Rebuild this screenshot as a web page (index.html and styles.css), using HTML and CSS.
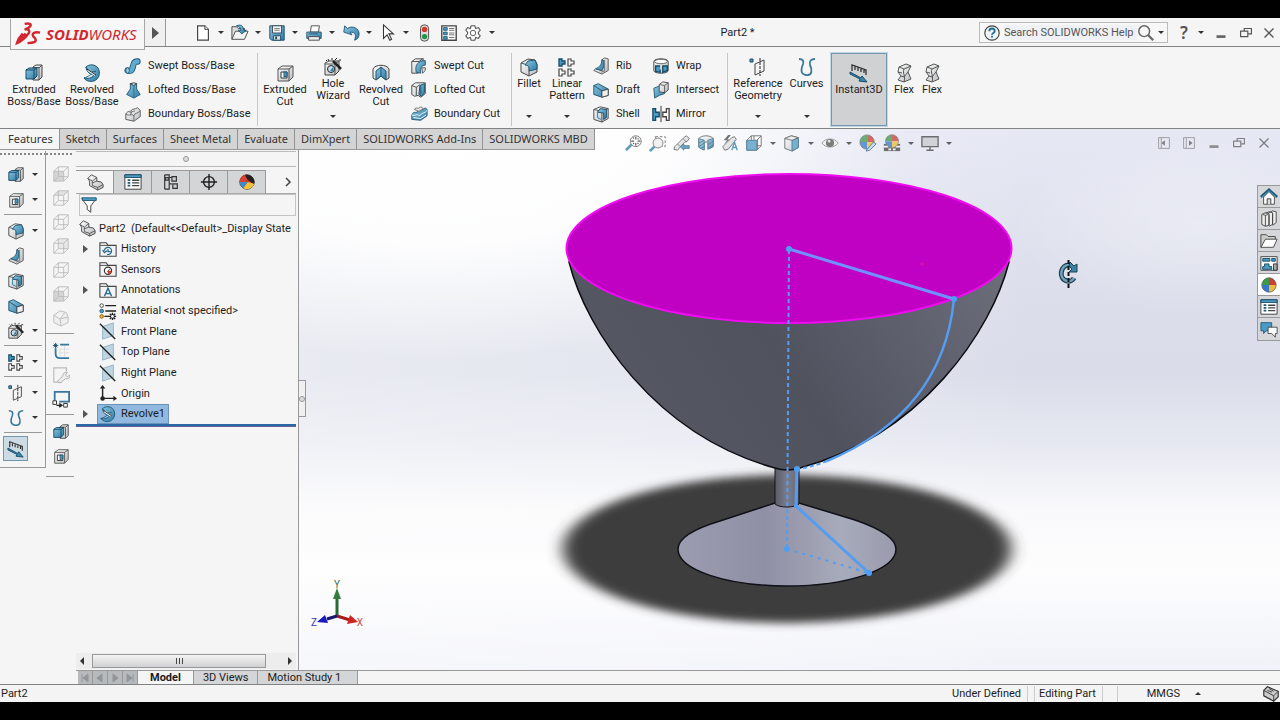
FILE: index.html
```html
<!DOCTYPE html>
<html lang="en">
<head>
<meta charset="utf-8">
<title>Part2 - SOLIDWORKS</title>
<link rel="stylesheet" href="styles.css">
</head>
<body>
<svg class="sprite" aria-hidden="true">
  <defs>
    <linearGradient id="blue" x1="0" y1="0" x2="1" y2="1"><stop offset="0" stop-color="#8cc4de"/><stop offset="1" stop-color="#2f7da6"/></linearGradient>
    <linearGradient id="gray" x1="0" y1="0" x2="1" y2="1"><stop offset="0" stop-color="#fff"/><stop offset="1" stop-color="#b9bcbf"/></linearGradient>
  </defs>
  <symbol id="ext-boss" viewBox="0 0 20 20"><path d="M9 4l3-2h6v12l-3 3H9z" fill="url(#gray)" stroke="#444"/><path d="M15 5v12M15 5l3-3M9 4.500h6" fill="none" stroke="#555"/><path d="M2 7l3-2h8v8l-3 3H2z" fill="url(#blue)" stroke="#174a66"/><path d="M2 7h8v9M10 7l3-2" fill="none" stroke="#174a66"/></symbol>
  <symbol id="rev-boss" viewBox="0 0 20 20"><path d="M4 4c3-3 9-3 12 1 3 5 1 11-4 13-4 1-8 0-10-3 4 1 8 0 10-3C9 12 4 9 4 4z" fill="url(#blue)" stroke="#1b5573"/><path d="M4 4c1 4 8 6 10 4M2 15c4-1 8-4 8-5" fill="none" stroke="#1b5573"/><path d="M6 7l7 5" stroke="#fff" stroke-width="2"/><path d="M5 6l9 6" stroke="#222"/></symbol>
  <symbol id="swept-boss" viewBox="0 0 20 20"><path d="M4 15c9 3 3-11 11-10" fill="none" stroke="#1f5877" stroke-width="7" stroke-linecap="round"/><path d="M4 15c9 3 3-11 11-10" fill="none" stroke="#62abd0" stroke-width="5" stroke-linecap="round"/><ellipse cx="4" cy="15" rx="2" ry="3" fill="#9cd0e8" stroke="#1f5877"/></symbol>
  <symbol id="loft-boss" viewBox="0 0 20 20"><path d="M7 3h7v6l4 6-7 4-8-4 4-6z" fill="url(#blue)" stroke="#1f5877"/><path d="M11 5v14" stroke="#2a6d90" fill="none"/><path d="M7 3l4 2 3-2-3-1z" fill="#dceef6" stroke="#333"/></symbol>
  <symbol id="bound-boss" viewBox="0 0 20 20"><path d="M2 10c2-4 5-2 6-4s5-1 7-3l3 3v7l-7 5-9-2z" fill="url(#gray)" stroke="#555"/><path d="M2 10c4 3 6-1 9 2 1-4 5-2 7-6M11 12v6M6 8c3 1 3-2 6-1M7 11l2-4" fill="none" stroke="#666"/></symbol>
  <symbol id="ext-cut" viewBox="0 0 20 20"><path d="M3 6l4-3h11v11l-4 4H3z" fill="url(#gray)" stroke="#555"/><path d="M3 6h11v12M14 6l4-3" fill="none" stroke="#555"/><path d="M6 9h6v6H6z" fill="#fff" stroke="#333"/><path d="M9 9h3v4l-3 1z" fill="#4b9cc4" stroke="#1f5877"/></symbol>
  <symbol id="hole" viewBox="0 0 20 20"><path d="M2 6l4-2h10v10l-4 4H2z" fill="url(#gray)" stroke="#444"/><path d="M2 7h10v11M12 7l4-3" fill="none" stroke="#555"/><circle cx="8" cy="12" r="3.500" fill="#c6dfeb" stroke="#222"/><path d="M7 14c3 1 4-1 3-4" fill="#2f7da6"/><path d="M10 4l8 8" stroke="#222" stroke-width="2.500"/><path d="M5 2l1 2M9 1v2M14 1l-2 2M3 3l1 1M16 3h2" stroke="#222"/></symbol>
  <symbol id="rev-cut" viewBox="0 0 20 20"><path d="M2 6c2-5 14-5 16 0v9l-3 2-5-4-5 4-3-2z" fill="url(#gray)" stroke="#444"/><path d="M5 8l5-4 5 4v9l-5-4-5 4z" fill="url(#blue)" stroke="#1f5877"/><path d="M10 4v9" stroke="#1f5877"/></symbol>
  <symbol id="swept-cut" viewBox="0 0 20 20"><path d="M2 5l4-3h9l-2 4-4 12H2z" fill="url(#gray)" stroke="#444"/><path d="M2 5h8M10 5l4-3" stroke="#444"/><path d="M17 4v5c-4 0-6 3-5 9l-5-1C5 9 9 4 17 4z" fill="url(#blue)" stroke="#1f5877"/><path d="M13 12h4v3l-3 3z" fill="#ddd" stroke="#555"/></symbol>
  <symbol id="loft-cut" viewBox="0 0 20 20"><path d="M2 5l4-3h11v12l-5 4-3-2-4 1-3-2z" fill="url(#gray)" stroke="#444"/><path d="M2 5l5 2v9M7 7l4-3" stroke="#444" fill="none"/><path d="M11 5l5-2v10l-3 4-3-2z" fill="url(#blue)" stroke="#174a66"/><path d="M12 5v10" stroke="#174a66"/></symbol>
  <symbol id="bound-cut" viewBox="0 0 20 20"><path d="M2 11c2-5 4-1 7-4 2-3 5 0 8-4l2 2v7l-7 5-10-1z" fill="url(#blue)" stroke="#1f5877"/><path d="M2 11c5 2 4-2 9 1 2-4 5-2 8-6M4 14l8 1 6-4" stroke="#fff" fill="none"/><path d="M5 5c2-4 4 1 7-3l3 2-5 3z" fill="#eee" stroke="#666"/></symbol>
  <symbol id="fillet" viewBox="0 0 20 20"><path d="M2 6l7-4 7 1 2 4v8l-8 4-8-4z" fill="url(#gray)" stroke="#444"/><path d="M9 8l-7-2M10 10v9" stroke="#555" fill="none"/><path d="M9 4l7-1 2 5v4l-8 2c1-4-1-6-4-6z" fill="url(#blue)" stroke="#1f5877"/></symbol>
  <symbol id="pattern" viewBox="0 0 20 20"><path d="M2 2h3v2h3v3H5v2H2z" fill="#4b9cc4" stroke="#174a66" stroke-width="1.300"/><path d="M11 2h3v2h3v3h-3v2h-3zM2 12h3v2h3v3H5v2H2zM11 12h3v2h3v3h-3v2h-3z" fill="#fff" stroke="#444" stroke-width="1.200"/></symbol>
  <symbol id="rib" viewBox="0 0 20 20"><path d="M11 3l3-2 4 1v13l-7 4-9-4 2-2 7 2z" fill="url(#gray)" stroke="#555"/><path d="M14 3v12l-4 2M11 15l3 1" fill="none" stroke="#777"/><path d="M11 3c0 5-2 8-7 10l6 2 3-3V4z" fill="url(#blue)" stroke="#1f5877"/></symbol>
  <symbol id="draft" viewBox="0 0 20 20"><path d="M2 5l5-2 11 6v7l-7 2-9-3z" fill="url(#blue)" stroke="#1f4f6b"/><path d="M2 5l9 6v7M11 11l7-2" fill="none" stroke="#1f4f6b"/><path d="M11 11l7-2v7l-7 2z" fill="#eee" stroke="#444"/></symbol>
  <symbol id="shell" viewBox="0 0 20 20"><path d="M2 5l7-3 9 2v11l-7 4-9-3z" fill="url(#gray)" stroke="#444"/><path d="M2 5l9 2 7-3M11 7v12" fill="none" stroke="#444"/><path d="M6 8l3-4 7 1v9l-3 2V9z" fill="url(#blue)" stroke="#174a66"/><path d="M6 8v6l4 2" stroke="#2f7da6" fill="#b7d9e8"/></symbol>
  <symbol id="wrap" viewBox="0 0 20 20"><path d="M2 5c0-4 16-4 16 0v10c0 4-16 4-16 0z" fill="url(#gray)" stroke="#444"/><ellipse cx="10" cy="5" rx="7" ry="2.500" fill="#fff" stroke="#555"/><path d="M9 10H4v6l5 1v-3M12 10h5v5l-5 2z" fill="#4b9cc4" stroke="#174a66" stroke-width="1.500"/></symbol>
  <symbol id="intersect" viewBox="0 0 20 20"><path d="M2 8l5-2 9 1-2 7-6 2-5 3z" fill="url(#blue)" stroke="#1f5877"/><path d="M8 4l4-3 6 1v8l-4 3-6-1z" fill="url(#gray)" stroke="#444"/><path d="M8 4l6 1 4-3M14 5v8" fill="none" stroke="#555"/></symbol>
  <symbol id="mirror" viewBox="0 0 20 20"><path d="M1 4h3v4h4v5H4v4H1z" fill="#4b9cc4" stroke="#174a66" stroke-width="1.500"/><path d="M19 4h-3v4h-4v5h4v4h3z" fill="#fff" stroke="#444" stroke-width="1.500"/><path d="M10 1v18" stroke="#222"/></symbol>
  <symbol id="refgeo" viewBox="0 0 20 20"><path d="M2 2h3v3H2z" fill="#5d97b5" stroke="#174a66"/><path d="M7 7l9-4v11l-9 4z" fill="#f5f5f5" stroke="#444"/><path d="M12 1v18" stroke="#222" stroke-dasharray="3 1"/></symbol>
  <symbol id="curves" viewBox="0 0 20 20"><path d="M2 2c4 0 5 2 4 5-2 5-3 10 3 11 7 1 6-6 4-10-1-4 1-6 5-6" fill="none" stroke="#37789c" stroke-width="1.800"/></symbol>
  <symbol id="instant" viewBox="0 0 20 20"><path d="M3 8V2l14 5v5M6 3v4M9 4v4M12 5v4M15 6v4" fill="none" stroke="#333" stroke-width="1.300"/><path d="M1 9l11 6 1-2 5 6-8-1 1-2L1 11z" fill="#3a88ae" stroke="#174a66"/></symbol>
  <symbol id="flex" viewBox="0 0 20 20"><path d="M5 4l7-3 5 2-3 6 3 7-7 3-6-2 3-4-3-4z" fill="url(#gray)" stroke="#555"/><path d="M5 4l5 2 7-3M10 6c-2 4 2 7 0 13M4 9l4 1M7 13l3 1 4-5" fill="none" stroke="#555"/></symbol>
  <symbol id="new" viewBox="0 0 20 20"><path d="M4 2h8l4 4v12H4z" fill="#fff" stroke="#444" stroke-width="1.300"/><path d="M12 2v4h4" fill="#ddd" stroke="#444"/></symbol>
  <symbol id="open" viewBox="0 0 20 20"><path d="M1 17V3h5l2 2h7v4" fill="#ddd" stroke="#444"/><path d="M1 17L5 8h14l-4 9z" fill="#f4f4f4" stroke="#444"/><path d="M6 2c5-2 8 0 8 5h3l-5 4-4-4h3c0-3-2-4-5-5z" fill="url(#blue)" stroke="#1f5877"/></symbol>
  <symbol id="save" viewBox="0 0 20 20"><path d="M2 2h16v16H4l-2-2z" fill="url(#blue)" stroke="#174a66"/><path d="M5 2h10v8H5z" fill="#f5f5f5" stroke="#345"/><path d="M7 5h6M7 7h6" stroke="#777"/><path d="M6 13h8v5H6z" fill="#ddd" stroke="#174a66"/><path d="M8 14h2v3H8z" fill="#174a66"/></symbol>
  <symbol id="print" viewBox="0 0 20 20"><path d="M6 9l1-7h9l-1 7z" fill="#fff" stroke="#444"/><path d="M2 9h16v7H2z" fill="url(#blue)" stroke="#1f4f6b"/><path d="M4 14h12v4H4z" fill="#eee" stroke="#444"/><path d="M4 11h10" stroke="#1f4f6b"/></symbol>
  <symbol id="undo" viewBox="0 0 20 20"><path d="M2 9l1-7 3 3c6-4 13 0 13 6 0 4-2 6-5 7 2-6 1-9-5-9l2 3z" fill="url(#blue)" stroke="#1f5877"/></symbol>
  <symbol id="cursor" viewBox="0 0 20 20"><path d="M5 1v15l4-4 3 6 2-1-3-6h5z" fill="#fff" stroke="#333" stroke-width="1.200"/></symbol>
  <symbol id="traffic" viewBox="0 0 20 20"><rect x="5" y="1" width="9" height="18" rx="4" fill="#ddd" stroke="#444"/><circle cx="9.500" cy="6" r="3" fill="#d43a2c"/><circle cx="9.500" cy="14" r="3" fill="#259447"/></symbol>
  <symbol id="props" viewBox="0 0 20 20"><path d="M2 2h16v16H2z" fill="#fff" stroke="#444" stroke-width="1.500"/><path d="M4 4h4v3H4zM4 9h4v3H4zM4 14h4v3H4z" fill="#4b9cc4" stroke="#235b78"/><path d="M10 5h6M10 7h6M10 10h6M10 12h6M10 15h6" stroke="#666"/></symbol>
  <symbol id="gear" viewBox="0 0 20 20"><path d="M8 2h4l1 3 3-1 2 3-2 2v2l2 2-2 3-3-1-1 3H8l-1-3-3 1-2-3 2-2V9L2 7l2-3 3 1z" fill="#fafafa" stroke="#555" stroke-width="1.200"/><circle cx="10" cy="10" r="3" fill="#fff" stroke="#555"/></symbol>
  <symbol id="help" viewBox="0 0 20 20"><circle cx="10" cy="10" r="8" fill="#eef4f7" stroke="#444" stroke-width="1.300"/><path d="M7 8c0-4 6-4 6 0 0 2-3 2-3 4M10 13v2" fill="none" stroke="#1f6a91" stroke-width="2"/></symbol>
  <symbol id="search" viewBox="0 0 20 20"><circle cx="8" cy="8" r="6" fill="none" stroke="#666" stroke-width="1.600"/><path d="M12 12l6 6" stroke="#666" stroke-width="2.500"/></symbol>
  <symbol id="zoomfit" viewBox="0 0 20 20"><path d="M7 12l-6 6" stroke="#2f7da6" stroke-width="3"/><circle cx="12" cy="8" r="6" fill="#fff" stroke="#444"/><path d="M12 3v3M12 10v3M7 8h3M14 8h3M10 5l-1-1M15 5l-1 1M9 11l1-1M14 10l1 1" stroke="#222" stroke-width="1.300"/></symbol>
  <symbol id="zoomarea" viewBox="0 0 20 20"><path d="M7 3h11v11h-4M7 3v2" stroke="#444" stroke-dasharray="3 2" fill="none"/><path d="M6 14l-5 5" stroke="#2f7da6" stroke-width="3"/><circle cx="10" cy="10" r="5.500" fill="#eee" stroke="#555"/></symbol>
  <symbol id="prevview" viewBox="0 0 20 20"><path d="M2 14L12 4l3-2 3 3-2 3-3 1-8 9-4-1z" fill="url(#gray)" stroke="#444"/><path d="M11 5l4 4M5 11l3 3" stroke="#555"/><path d="M18 13v3h-6v2l-4-4 4-3v2z" fill="#3a88ae" stroke="#1f5877"/></symbol>
  <symbol id="section" viewBox="0 0 20 20"><path d="M2 5c3-4 13-4 16 0v9l-4 2V9H8v8l-6-3z" fill="url(#gray)" stroke="#444"/><path d="M2 5l6 2v11l-6-3zM12 7l6-2v9l-6 3z" fill="url(#blue)" stroke="#1f5877"/><path d="M2 10l6-3M2 14l6-4M4 16l4-2M12 12l6-4M12 16l6-4" stroke="#1f5877" fill="none"/></symbol>
  <symbol id="annoview" viewBox="0 0 20 20"><path d="M2 14L12 4l3-1 2 3-9 11-4 1z" fill="url(#gray)" stroke="#444"/><path d="M8 1l-5 6h4l-4 4 7-5H7l4-5z" fill="#444"/><path d="M12 18l3-9 3 9M13 15h4" stroke="#2f7da6" stroke-width="1.500" fill="none"/></symbol>
  <symbol id="orient" viewBox="0 0 20 20"><path d="M2 7l5-5h11v11l-5 5H2z" fill="#fff" stroke="#444"/><path d="M2 7h11v11H2z" fill="#4b9cc4" stroke="#1f5877"/><path d="M7 2v5M13 7l5-5M13 13h5M10 2v5M14 6v11" stroke="#444"/></symbol>
  <symbol id="display" viewBox="0 0 20 20"><path d="M2 5l7-3 8 2v11l-7 4-8-3z" fill="url(#gray)" stroke="#444"/><path d="M10 7l7-3v11l-7 4z" fill="#4b9cc4" stroke="#1f5877"/><path d="M2 5l8 2 7-3-8-2z" fill="#eee" stroke="#444"/></symbol>
  <symbol id="eye" viewBox="0 0 20 20"><path d="M1 10c4-6 14-6 18 0-4 6-14 6-18 0z" fill="#f0f0f0" stroke="#777"/><circle cx="10" cy="10" r="4.500" fill="#555"/><circle cx="9" cy="8" r="1.500" fill="#ddd"/></symbol>
  <symbol id="ball" viewBox="0 0 20 20"><circle cx="10" cy="10" r="8" fill="#fff"/><path d="M10 10V2a8 8 0 0 0-8 8z" fill="#3c9b45"/><path d="M10 10h8a8 8 0 0 0-8-8z" fill="#cc3e38"/><path d="M10 10H2a8 8 0 0 0 8 8z" fill="#3479cf"/><path d="M10 10v8a8 8 0 0 0 8-8z" fill="#efbe34"/><circle cx="10" cy="10" r="8" fill="none" stroke="#555" stroke-width=".8"/></symbol>
  <symbol id="ballpencil" viewBox="0 0 20 20"><use href="#ball" x="-1" y="-1" width="20" height="20"/><path d="M9 17l7-8 3 2-7 7-4 1z" fill="#b7d9e8" stroke="#1f5877"/></symbol>
  <symbol id="scene" viewBox="0 0 20 20"><path d="M1 11h18v8H1z" fill="#444"/><path d="M1 13h5v2H1zM14 13h5v2h-5zM6 16h3v2H6zM11 16h3v2h-3z" fill="#fff"/><use href="#ball" x="1" y="-1" width="18" height="18"/></symbol>
  <symbol id="apptab" viewBox="0 0 20 20"><circle cx="10" cy="10" r="8" fill="#c8392f" stroke="#333"/><path d="M2 10a8 8 0 0 1 6-8c4 1 2 7 0 8z" fill="#d8402f"/><path d="M2 10h9l-5 7a8 8 0 0 1-4-7z" fill="#438ac5"/><path d="M6 17l5-7 7 2c-2 6-8 7-12 5z" fill="#f0c339"/><path d="M8 2c6-1 11 4 10 10-5-2-9-5-10-10z" fill="#222"/></symbol>
  <symbol id="monitor" viewBox="0 0 20 20"><path d="M1 3h18v11H1z" fill="#c7ccd0" stroke="#444" stroke-width="1.500"/><path d="M10 14v4M6 18h8" stroke="#444" stroke-width="1.500"/></symbol>
  <symbol id="dock-l" viewBox="0 0 20 20"><path d="M4 4h12v12H4zM7 4v12" fill="none" stroke="#777"/><path d="M7 10l4-3v6z" fill="#555"/></symbol>
  <symbol id="dock-r" viewBox="0 0 20 20"><path d="M4 4h12v12H4zM7 4v12" fill="none" stroke="#777"/><path d="M14 10l-4-3v6z" fill="#555"/></symbol>
  <symbol id="min" viewBox="0 0 20 20"><path d="M5 14h10" stroke="#666" stroke-width="3"/></symbol>
  <symbol id="restore" viewBox="0 0 20 20"><path d="M4 8h8v6H4zM8 8V5h8v6h-4" fill="none" stroke="#555" stroke-width="1.300"/></symbol>
  <symbol id="close" viewBox="0 0 20 20"><path d="M5 5l10 10M15 5L5 15" stroke="#555" stroke-width="1.500"/></symbol>
  <symbol id="home" viewBox="0 0 20 20"><path d="M4 10v8h12v-8l-6-6z" fill="#fff" stroke="#444"/><path d="M1 10l9-8 9 8" fill="none" stroke="#1f5877" stroke-width="3"/><path d="M2 10l8-7 8 7" fill="none" stroke="#4b9cc4"/><path d="M8 18v-6h4v6" fill="#ddd" stroke="#333"/></symbol>
  <symbol id="library" viewBox="0 0 20 20"><path d="M2 5l4-2 4 1v13l-4 1-4-2zM6 4l4-2 4 1v13l-4 2M10 3l4-2 4 1v12l-4 3" fill="#eee" stroke="#444"/><path d="M6 6v12M10 5v12M14 4v12M3 5l3 1 3-1" fill="none" stroke="#444"/></symbol>
  <symbol id="folder" viewBox="0 0 20 20"><path d="M1 17V3h6l2 2h8v3" fill="#ccc" stroke="#444"/><path d="M1 17L6 8h13l-4 9z" fill="#fff" stroke="#444"/></symbol>
  <symbol id="palette" viewBox="0 0 20 20"><path d="M1 3h18v15H1z" fill="#fff" stroke="#333"/><path d="M3 5h8v3H3zM13 5h4v3h-4zM5 11h5v3h3v3H3v-3h2z" fill="#4b9cc4" stroke="#174a66"/><path d="M15 11h4v7h-4z" fill="#aaa" stroke="#333"/></symbol>
  <symbol id="list" viewBox="0 0 20 20"><path d="M1 2h18v16H1z" fill="#fff" stroke="#333"/><path d="M1 2h18v3H1z" fill="#4b9cc4" stroke="#174a66"/><path d="M4 8h3M4 11h3M4 14h3" stroke="#1f5877" stroke-width="2"/><path d="M9 8h8M9 11h8M9 14h8" stroke="#444" stroke-width="1.500"/></symbol>
  <symbol id="chat" viewBox="0 0 20 20"><path d="M1 3h12v9H7l-3 3v-3H1z" fill="#4b9cc4" stroke="#1f5877"/><path d="M9 8h10v7h-2v4l-4-4H9z" fill="#fff" stroke="#444"/></symbol>
  <symbol id="part" viewBox="0 0 20 20"><path d="M2 6l4-4 6 3v4l5 1 2 3v3l-6 3-9-5V9z" fill="url(#gray)" stroke="#444"/><path d="M2 6l5 3 5-4M7 9v5l6 2 6-3M7 11l5-2M13 16v3" fill="none" stroke="#555"/></symbol>
  <symbol id="config" viewBox="0 0 20 20"><path d="M3 2h5v16H3M3 2v16M8 5h3M8 12h3" fill="none" stroke="#333" stroke-width="1.300"/><path d="M4 5h3v3H4zM11 4h5v5h-5zM12 12h5v5h-5z" fill="#ccc" stroke="#333" stroke-width="1.300"/></symbol>
  <symbol id="target" viewBox="0 0 20 20"><circle cx="10" cy="10" r="6" fill="none" stroke="#222" stroke-width="1.600"/><path d="M10 1v18M1 10h18" stroke="#222" stroke-width="1.600"/></symbol>
  <symbol id="filter" viewBox="0 0 20 20"><path d="M2 3h16l-6 8v7l-4-3v-4z" fill="#fff" stroke="#333"/><path d="M2 2h16v3H3z" fill="#4b9cc4" stroke="#1f5877"/></symbol>
  <symbol id="cube" viewBox="0 0 20 20"><path d="M2 7l5-5h11v11l-5 5H2zM2 7h11v11M13 7l5-5M7 2v11h11M7 13l-5 5" fill="none" stroke="#bbb"/></symbol>
  <symbol id="cube-front" viewBox="0 0 20 20"><path d="M2 7h11v11H2z" fill="#d5d5d5"/><use href="#cube" width="20" height="20"/></symbol>
  <symbol id="cube-top" viewBox="0 0 20 20"><path d="M2 7l5-5h11l-5 5z" fill="#e2e2e2"/><use href="#cube" width="20" height="20"/></symbol>
  <symbol id="cube-iso" viewBox="0 0 20 20"><path d="M7 2h11v11H7z" fill="#e8e8e8"/><use href="#cube" width="20" height="20"/></symbol>
  <symbol id="cube-fil" viewBox="0 0 20 20"><path d="M2 7l7-5 7 2 2 5v6l-8 4-8-4zM2 7l7 4 5-7M9 11l1 8M9 11l9-2" fill="#eee" stroke="#bbb"/></symbol>
  <symbol id="sketch" viewBox="0 0 20 20"><path d="M9 7v9M14 4v12M8 8h11M8 12h11" stroke="#ddd"/><path d="M19 3H9M4 7v6c0 3 2 5 5 5h10" fill="none" stroke="#37789c" stroke-width="2"/><path d="M1 4h6M4 1v6M2 2l4 4M6 2L2 6" stroke="#174a66"/></symbol>
  <symbol id="repair" viewBox="0 0 20 20"><path d="M16 6V2H2v16h9" fill="none" stroke="#bbb" stroke-width="1.300"/><path d="M6 17l6-6c0-3 2-4 5-4l-2 3 2 2 3-2c0 4-3 5-5 4l-6 5z" fill="#eee" stroke="#aaa"/></symbol>
  <symbol id="rect" viewBox="0 0 20 20"><path d="M3 12V2h16v11H8" fill="none" stroke="#37789c" stroke-width="2"/><path d="M1 12h4v4H1zM13 15h4v4h-4z" fill="#fff" stroke="#222"/><path d="M5 17h5M8 15l3 2-3 2" stroke="#222" fill="none" stroke-width="1.500"/></symbol>
  <symbol id="fold" viewBox="0 0 20 20"><path d="M1 18V3h7l2 3h9v12z" fill="#f4f4f4" stroke="#444" stroke-width="1.200"/><path d="M1 6h9" stroke="#444"/></symbol>
  <symbol id="history" viewBox="0 0 20 20"><use href="#fold" width="20" height="20"/><path d="M6 12a4 4 0 1 1 3 4M4 11l2 3 3-2M10 10v3h3" fill="none" stroke="#1f6a91" stroke-width="1.300"/></symbol>
  <symbol id="sensors" viewBox="0 0 20 20"><use href="#fold" width="20" height="20"/><circle cx="10" cy="12" r="4" fill="#fff" stroke="#333" stroke-width="1.300"/><path d="M10 12h4l-2 4-2-1z" fill="#d43a2c"/><path d="M9 13l3-3" stroke="#333"/></symbol>
  <symbol id="anno" viewBox="0 0 20 20"><use href="#fold" width="20" height="20"/><path d="M6 17l4-9 4 9M8 14h5" fill="none" stroke="#1f6a91" stroke-width="1.500"/></symbol>
  <symbol id="material" viewBox="0 0 20 20"><circle cx="3" cy="4" r="2" fill="#fff" stroke="#444"/><circle cx="3" cy="10" r="2" fill="#4b9cc4" stroke="#1f5877"/><circle cx="3" cy="16" r="2" fill="#f0b429" stroke="#8a6410"/><path d="M7 4h12M7 10h12" stroke="#222" stroke-width="1.600"/><path d="M6 16h13M15 12v8M12 13l6 6M18 13l-6 6" stroke="#222" stroke-width="1.500"/><circle cx="15" cy="16" r="1.500" fill="#fff"/></symbol>
  <symbol id="plane" viewBox="0 0 20 20"><path d="M4 5l12-4v14L4 19z" fill="#bfd5e2" stroke="#8db1c5"/><path d="M1 2l17 17" stroke="#222" stroke-width="1.500"/></symbol>
  <symbol id="origin" viewBox="0 0 20 20"><path d="M4 3v13h13" fill="none" stroke="#222" stroke-width="1.600"/><path d="M4 1L1 5h6zM20 16l-4-3v6z" fill="#222"/><circle cx="4" cy="16" r="2.500" fill="#222"/></symbol>
  <symbol id="tag" viewBox="0 0 20 20"><path d="M2 6l4-4 12 5v6l-5 5L2 12z" fill="#ccc" stroke="#333" stroke-width="1.300"/><path d="M2 6l11 6 5-5M13 12v6M6 6l5 2M8 4l5 3" fill="none" stroke="#333"/></symbol>
</svg>

<header class="titlebar">
  <div class="logo">
    <svg class="ds" viewBox="0 0 28 26" aria-hidden="true"><path d="M10 2c5-1 7 0 6 2s-4 3-6 4c4-1 6 1 4 4-3 4-7 8-12 10 1-4 3-7 6-10M2 22l9-10" /><path d="M26 11c-6-1-9 1-7 4 2 2 4 4 1 6-2 1-5 1-7 1"/></svg>
    <span class="wordmark"><b>SOLID</b>WORKS</span>
  </div>
  <button class="flyout" aria-label="Show menu"><i class="tri-right"></i></button>
  <div class="quick">
    <div class="pair"><button aria-label="New"><svg class="ic"><use href="#new"/></svg></button><button class="drop" aria-label="New options"></button></div>
    <div class="pair"><button aria-label="Open"><svg class="ic"><use href="#open"/></svg></button><button class="drop" aria-label="Open options"></button></div>
    <div class="pair"><button aria-label="Save"><svg class="ic"><use href="#save"/></svg></button><button class="drop" aria-label="Save options"></button></div>
    <div class="pair"><button aria-label="Print"><svg class="ic"><use href="#print"/></svg></button><button class="drop" aria-label="Print options"></button></div>
    <div class="pair"><button aria-label="Undo"><svg class="ic"><use href="#undo"/></svg></button><button class="drop" aria-label="Undo options"></button></div>
    <div class="pair"><button aria-label="Select"><svg class="ic"><use href="#cursor"/></svg></button><button class="drop" aria-label="Select options"></button></div>
    <div class="trio"><button aria-label="Rebuild"><svg class="ic"><use href="#traffic"/></svg></button><button aria-label="File properties"><svg class="ic"><use href="#props"/></svg></button><button aria-label="Options"><svg class="ic"><use href="#gear"/></svg></button></div>
    <button class="drop" aria-label="More options"></button>
  </div>
  <h1>Part2 *</h1>
  <div class="helpsearch">
    <svg class="ic"><use href="#help"/></svg>
    <input type="text" aria-label="Search SOLIDWORKS Help" placeholder="Search SOLIDWORKS Help">
    <button aria-label="Search"><svg class="ic"><use href="#search"/></svg></button>
    <button class="drop" aria-label="Search scope"></button>
  </div>
  <div class="winctl">
    <button class="q" aria-label="Help">?</button><button class="drop" aria-label="Help menu"></button>
    <button class="win" aria-label="Minimize"><svg class="ic"><use href="#min"/></svg></button>
    <button class="win" aria-label="Restore"><svg class="ic"><use href="#restore"/></svg></button>
    <button class="win" aria-label="Close"><svg class="ic"><use href="#close"/></svg></button>
  </div>
</header>

<section class="ribbon" aria-label="Features">
  <div class="group g-boss">
    <button class="big low"><svg class="ic"><use href="#ext-boss"/></svg>Extruded<br>Boss/Base</button>
    <button class="big low"><svg class="ic"><use href="#rev-boss"/></svg>Revolved<br>Boss/Base</button>
    <div class="stack">
      <button><svg class="ic"><use href="#swept-boss"/></svg>Swept Boss/Base</button>
      <button><svg class="ic"><use href="#loft-boss"/></svg>Lofted Boss/Base</button>
      <button><svg class="ic"><use href="#bound-boss"/></svg>Boundary Boss/Base</button>
    </div>
  </div>
  <div class="group g-cut">
    <button class="big low"><svg class="ic"><use href="#ext-cut"/></svg>Extruded<br>Cut</button>
    <button class="big"><svg class="ic"><use href="#hole"/></svg>Hole<br>Wizard<i class="tri"></i></button>
    <button class="big low"><svg class="ic"><use href="#rev-cut"/></svg>Revolved<br>Cut</button>
    <div class="stack">
      <button><svg class="ic"><use href="#swept-cut"/></svg>Swept Cut</button>
      <button><svg class="ic"><use href="#loft-cut"/></svg>Lofted Cut</button>
      <button><svg class="ic"><use href="#bound-cut"/></svg>Boundary Cut</button>
    </div>
  </div>
  <div class="group g-edit">
    <button class="big"><svg class="ic"><use href="#fillet"/></svg>Fillet<i class="tri"></i></button>
    <button class="big"><svg class="ic"><use href="#pattern"/></svg>Linear<br>Pattern<i class="tri"></i></button>
    <div class="stack">
      <button><svg class="ic"><use href="#rib"/></svg>Rib</button>
      <button><svg class="ic"><use href="#draft"/></svg>Draft</button>
      <button><svg class="ic"><use href="#shell"/></svg>Shell</button>
    </div>
    <div class="stack">
      <button><svg class="ic"><use href="#wrap"/></svg>Wrap</button>
      <button><svg class="ic"><use href="#intersect"/></svg>Intersect</button>
      <button><svg class="ic"><use href="#mirror"/></svg>Mirror</button>
    </div>
  </div>
  <div class="group g-ref">
    <button class="big"><svg class="ic"><use href="#refgeo"/></svg>Reference<br>Geometry<i class="tri"></i></button>
    <button class="big"><svg class="ic"><use href="#curves"/></svg>Curves<i class="tri"></i></button>
  </div>
  <div class="group g-flex">
    <button class="big low on" aria-pressed="true"><svg class="ic"><use href="#instant"/></svg>Instant3D</button>
    <button class="big low"><svg class="ic"><use href="#flex"/></svg>Flex</button>
    <button class="big low"><svg class="ic"><use href="#flex"/></svg>Flex</button>
  </div>
</section>

<main class="work">
  <nav class="cmdtabs" aria-label="Command tabs">
    <button class="on">Features</button><button>Sketch</button><button>Surfaces</button><button>Sheet Metal</button><button>Evaluate</button><button>DimXpert</button><button>SOLIDWORKS Add-Ins</button><button>SOLIDWORKS MBD</button>
  </nav>

  <div class="sides">
    <div class="bar bar-a">
      <div><button aria-label="Extruded Boss"><svg class="ic"><use href="#ext-boss"/></svg></button><button class="drop" aria-label="Boss options"></button></div>
      <div><button aria-label="Extruded Cut"><svg class="ic"><use href="#ext-cut"/></svg></button><button class="drop" aria-label="Cut options"></button></div>
      <hr>
      <div><button aria-label="Fillet"><svg class="ic"><use href="#fillet"/></svg></button><button class="drop" aria-label="Fillet options"></button></div>
      <div><button aria-label="Rib"><svg class="ic"><use href="#rib"/></svg></button></div>
      <div><button aria-label="Shell"><svg class="ic"><use href="#shell"/></svg></button></div>
      <div><button aria-label="Draft"><svg class="ic"><use href="#draft"/></svg></button></div>
      <div><button aria-label="Hole Wizard"><svg class="ic"><use href="#hole"/></svg></button><button class="drop" aria-label="Hole options"></button></div>
      <hr>
      <div><button aria-label="Linear Pattern"><svg class="ic"><use href="#pattern"/></svg></button><button class="drop" aria-label="Pattern options"></button></div>
      <hr>
      <div><button aria-label="Reference Geometry"><svg class="ic"><use href="#refgeo"/></svg></button><button class="drop" aria-label="Geometry options"></button></div>
      <div><button aria-label="Curves"><svg class="ic"><use href="#curves"/></svg></button><button class="drop" aria-label="Curve options"></button></div>
      <hr>
      <div><button class="on" aria-label="Instant3D"><svg class="ic"><use href="#instant"/></svg></button></div>
    </div>
    <div class="bar bar-b">
      <button aria-label="Front"><svg class="ic"><use href="#cube-front"/></svg></button>
      <button aria-label="Back"><svg class="ic"><use href="#cube-top"/></svg></button>
      <button aria-label="Left"><svg class="ic"><use href="#cube"/></svg></button>
      <button aria-label="Right"><svg class="ic"><use href="#cube-iso"/></svg></button>
      <button aria-label="Top"><svg class="ic"><use href="#cube"/></svg></button>
      <button aria-label="Bottom"><svg class="ic"><use href="#cube-front"/></svg></button>
      <button aria-label="Isometric"><svg class="ic"><use href="#cube-fil"/></svg></button>
      <hr>
      <button aria-label="Sketch"><svg class="ic"><use href="#sketch"/></svg></button>
      <button aria-label="Repair sketch"><svg class="ic"><use href="#repair"/></svg></button>
      <button aria-label="Rapid sketch"><svg class="ic"><use href="#rect"/></svg></button>
      <hr>
      <button aria-label="Boss"><svg class="ic"><use href="#ext-boss"/></svg></button>
      <button aria-label="Cut"><svg class="ic"><use href="#ext-cut"/></svg></button>
    </div>
  </div>

  <div class="center">
    <div class="panes">
      <aside class="manager">
        <div class="grip"><i class="knob"></i></div>
        <div class="mtabs">
          <button class="on" aria-label="Feature tree"><svg class="ic"><use href="#part"/></svg></button>
          <button aria-label="Properties"><svg class="ic"><use href="#list"/></svg></button>
          <button aria-label="Configurations"><svg class="ic"><use href="#config"/></svg></button>
          <button aria-label="DimXpert"><svg class="ic"><use href="#target"/></svg></button>
          <button aria-label="Appearances"><svg class="ic"><use href="#apptab"/></svg></button>
          <button class="more" aria-label="More tabs"><svg viewBox="0 0 8 12"><path d="M2 2l4 4-4 4"/></svg></button>
        </div>
        <div class="filter"><svg class="ic"><use href="#filter"/></svg><input type="text" aria-label="Filter tree"></div>
        <ul class="tree">
          <li class="root"><svg class="ic"><use href="#part"/></svg><span>Part2&nbsp; (Default&lt;&lt;Default&gt;_Display State</span></li>
          <li><i class="tri-right"></i><svg class="ic"><use href="#history"/></svg><span>History</span></li>
          <li><i></i><svg class="ic"><use href="#sensors"/></svg><span>Sensors</span></li>
          <li><i class="tri-right"></i><svg class="ic"><use href="#anno"/></svg><span>Annotations</span></li>
          <li><i></i><svg class="ic"><use href="#material"/></svg><span>Material &lt;not specified&gt;</span></li>
          <li><i></i><svg class="ic"><use href="#plane"/></svg><span>Front Plane</span></li>
          <li><i></i><svg class="ic"><use href="#plane"/></svg><span>Top Plane</span></li>
          <li><i></i><svg class="ic"><use href="#plane"/></svg><span>Right Plane</span></li>
          <li><i></i><svg class="ic"><use href="#origin"/></svg><span>Origin</span></li>
          <li><i class="tri-right"></i><b class="sel"><svg class="ic"><use href="#rev-boss"/></svg><span>Revolve1</span></b></li>
        </ul>
        <div class="rollback"></div>
        <div class="hscroll"><i class="tri-left"></i><div class="thumb"><i></i><i></i><i></i></div><i class="tri-right"></i></div>
      </aside>

      <section class="viewport" aria-label="Graphics area">
        <svg class="scene" viewBox="299 129 981 541" preserveAspectRatio="xMidYMid slice">
          <defs>
            <linearGradient id="sky" x1="0" y1="0" x2="0" y2="1">
              <stop offset="0" stop-color="#e6e8f4"/><stop offset=".3" stop-color="#dcdfeb"/><stop offset=".45" stop-color="#dadde9"/><stop offset=".58" stop-color="#e6e8f1"/><stop offset=".7" stop-color="#f9f9fb"/><stop offset=".82" stop-color="#fdfdfe"/><stop offset="1" stop-color="#f1f2f9"/>
            </linearGradient>
            <linearGradient id="glow" x1="0" y1="0" x2="1" y2="0"><stop offset="0" stop-color="#fff" stop-opacity=".4"/><stop offset=".45" stop-color="#fff" stop-opacity=".25"/><stop offset=".75" stop-color="#fff" stop-opacity="0"/></linearGradient>
            <radialGradient id="corner" gradientUnits="userSpaceOnUse" cx="0" cy="0" r="1" gradientTransform="translate(440 129) scale(470 230)"><stop offset="0" stop-color="#fff"/><stop offset=".5" stop-color="#fff" stop-opacity=".9"/><stop offset="1" stop-color="#fff" stop-opacity="0"/></radialGradient>
            <radialGradient id="haze"><stop offset="0" stop-color="#fff" stop-opacity=".3"/><stop offset="1" stop-color="#fff" stop-opacity="0"/></radialGradient>
            <linearGradient id="bowl" x1="0" y1=".3" x2="1" y2="0"><stop offset="0" stop-color="#555863"/><stop offset=".4" stop-color="#50525e"/><stop offset=".8" stop-color="#636573"/><stop offset="1" stop-color="#6c6e78"/></linearGradient>
            <linearGradient id="stem" x1="0" y1="0" x2="1" y2="0"><stop offset="0" stop-color="#5b5c69"/><stop offset=".5" stop-color="#7b7c8c"/><stop offset="1" stop-color="#686a7a"/></linearGradient>
            <linearGradient id="foot" x1="0" y1="0" x2="1" y2="0"><stop offset="0" stop-color="#9b9cb0"/><stop offset=".4" stop-color="#8f90a5"/><stop offset=".55" stop-color="#9a9bae"/><stop offset=".75" stop-color="#a7abbb"/><stop offset="1" stop-color="#9a9bae"/></linearGradient>
            <filter id="soft" x="-10%" y="-20%" width="120%" height="140%"><feGaussianBlur stdDeviation="8 4"/></filter>
          </defs>
          <path fill="url(#sky)" d="M299 129h981v541H299z"/>
          <path fill="url(#glow)" d="M299 129h981v541H299z"/>
          <path fill="url(#corner)" d="M299 129h981v541H299z"/>
          <ellipse cx="1200" cy="225" rx="190" ry="90" fill="url(#haze)"/>
          <ellipse cx="787" cy="549" rx="224" ry="74" fill="#3d3d3d" filter="url(#soft)"/>
          <path d="M775 503L720 521C690 530 678 539 678 549C678 570 727 586 787 586S896 570 896 549C896 539 884 530 855 520L799 503z" fill="url(#foot)" stroke="#101018" stroke-width="1.500"/>
          <path d="M775 465v39c4 4 20 4 24 0v-39z" fill="url(#stem)" stroke="#14141c"/>
          <path d="M569 262C586 330 655 435 775 468Q787 472 800 468C922 435 992 330 1009 262z" fill="url(#bowl)" stroke="#0c0c12" stroke-width="1.500"/>
          <ellipse cx="789" cy="248.500" rx="222.500" ry="74.500" fill="#c000c2" stroke="#ee0cf0" stroke-width="2"/>
          <path d="M919 264h6M922 262v4" stroke="#dc10a8"/>
          <g fill="none" stroke="#559df0" stroke-width="2">
            <path d="M789 250L787 549" stroke-dasharray="4 3"/>
            <path d="M787 549L869 573" stroke-dasharray="3 5"/>
            <path d="M789 249L954 299" stroke="#7091ff" stroke-width="3"/>
            <path d="M954 299C947 370 908 427 827 461" stroke-width="2.500"/>
            <path d="M827 461Q812 467 797 469" stroke-dasharray="4 3"/>
            <path d="M797 468L796 506L869 573" stroke-width="3"/>
          </g>
          <g fill="#4ba0f5"><circle cx="789" cy="249" r="3"/><circle cx="954" cy="299" r="3"/><circle cx="797" cy="469" r="3"/><circle cx="787" cy="549" r="3"/><circle cx="869" cy="573" r="3"/><circle cx="796" cy="506" r="2"/></g>
          <g stroke-width="3">
            <path d="M337 616V597" stroke="#276c35"/><path d="M337 588l4 11h-8z" fill="#337c41"/>
            <path d="M337 616l13 4" stroke="#a51b1b"/><path d="M358 622l-11 2 3-9z" fill="#cf2222"/>
            <path d="M337 616l-10 3" stroke="#16166e"/><path d="M317 622l8-7 3 8z" fill="#1a1ac0"/>
          </g>
          <g font-size="10" text-anchor="middle"><text x="337" y="588" fill="#3d7048">Y</text><text x="360" y="626" fill="#d34a50">X</text><text x="314" y="626" fill="#3434b4">Z</text></g>
          <path d="M1070 265c-10-1-12 14-3 16 3 1 6-1 7-3" fill="none" stroke="#203f50" stroke-width="5"/>
          <path d="M1070 265c-10-1-12 14-3 16 3 1 6-1 7-3" fill="none" stroke="#6da4bd" stroke-width="2.500"/>
          <path d="M1070 262l4 4 3-2v8h-8l3-3-3-3z" fill="#3985a8" stroke="#203f50"/>
          <path d="M1068.500 260v28" stroke="#111" stroke-width="2" stroke-dasharray="4 2"/>
        </svg>
        <button class="splitter" aria-label="Collapse panel"><i class="knob"></i></button>
        <div class="hud">
          <button aria-label="Zoom to fit"><svg class="ic"><use href="#zoomfit"/></svg></button>
          <button aria-label="Zoom to area"><svg class="ic"><use href="#zoomarea"/></svg></button>
          <button aria-label="Previous view"><svg class="ic"><use href="#prevview"/></svg></button>
          <button aria-label="Section view"><svg class="ic"><use href="#section"/></svg></button>
          <button aria-label="Annotation views"><svg class="ic"><use href="#annoview"/></svg></button>
          <button aria-label="View orientation"><svg class="ic"><use href="#orient"/></svg></button><button class="drop" aria-label="Orientation options"></button>
          <button aria-label="Display style"><svg class="ic"><use href="#display"/></svg></button><button class="drop" aria-label="Display options"></button>
          <button aria-label="Hide or show items"><svg class="ic"><use href="#eye"/></svg></button><button class="drop" aria-label="Visibility options"></button>
          <button aria-label="Edit appearance"><svg class="ic"><use href="#ballpencil"/></svg></button>
          <button aria-label="Apply scene"><svg class="ic"><use href="#scene"/></svg></button><button class="drop" aria-label="Scene options"></button>
          <button aria-label="View settings"><svg class="ic"><use href="#monitor"/></svg></button><button class="drop" aria-label="Settings options"></button>
        </div>
        <div class="docctl">
          <button aria-label="Dock left"><svg class="ic"><use href="#dock-l"/></svg></button>
          <button aria-label="Dock right"><svg class="ic"><use href="#dock-r"/></svg></button>
          <button aria-label="Minimize document"><svg class="ic"><use href="#min"/></svg></button>
          <button aria-label="Restore document"><svg class="ic"><use href="#restore"/></svg></button>
          <button aria-label="Close document"><svg class="ic"><use href="#close"/></svg></button>
        </div>
        <div class="taskpane">
          <button aria-label="Resources"><svg class="ic"><use href="#home"/></svg></button>
          <button aria-label="Design library"><svg class="ic"><use href="#library"/></svg></button>
          <button aria-label="File explorer"><svg class="ic"><use href="#folder"/></svg></button>
          <button aria-label="View palette"><svg class="ic"><use href="#palette"/></svg></button>
          <button class="on" aria-label="Appearances"><svg class="ic"><use href="#ball"/></svg></button>
          <button aria-label="Custom properties"><svg class="ic"><use href="#list"/></svg></button>
          <button aria-label="Forum"><svg class="ic"><use href="#chat"/></svg></button>
        </div>
      </section>
    </div>
    <nav class="doctabs" aria-label="Document tabs">
      <div class="steps"><button aria-label="First"><svg viewBox="0 0 14 12"><path d="M4 2v8M10 2L5 6l5 4z"/></svg></button><button aria-label="Previous"><svg viewBox="0 0 14 12"><path d="M9 2L4 6l5 4z"/></svg></button><button aria-label="Next"><svg viewBox="0 0 14 12"><path d="M5 2l5 4-5 4z"/></svg></button><button aria-label="Last"><svg viewBox="0 0 14 12"><path d="M10 2v8M4 2l5 4-5 4z"/></svg></button></div>
      <button class="on">Model</button><button>3D Views</button><button class="wide">Motion Study 1</button>
    </nav>
  </div>
</main>

<footer class="status">
  <span class="doc">Part2</span><span class="cell">Under Defined</span><span class="cell edit">Editing Part</span><span class="cell gap"></span><span class="units">MMGS</span><button class="up" aria-label="Unit system"><i class="tri-up"></i></button><svg class="ic"><use href="#tag"/></svg>
</footer>
</body>
</html>
```
FILE: styles.css
```css
* { box-sizing: border-box; }
html, body { height: 100%; }
body {
  margin: 0;
  padding: 18px 0;
  display: flex;
  flex-direction: column;
  overflow: hidden;
  background: #000;
  color: #1c1c1c;
  font: 11px/12px Roboto, "Noto Sans", sans-serif;
}
button {
  display: flex;
  align-items: center;
  justify-content: center;
  flex: none;
  margin: 0;
  padding: 0;
  border: 0;
  background: none;
  color: inherit;
  font: inherit;
  white-space: nowrap;
}
input { border: 0; outline: 0; background: none; font: inherit; min-width: 0; padding: 0; }
.sprite { position: absolute; width: 0; height: 0; }
.ic { display: block; flex: none; width: 18px; height: 18px; }
.drop { width: 16px; height: 20px; }
.drop::before, .tri { content: ""; border: 3px solid transparent; border-top-color: #333; border-bottom: 0; }
.tri-right { border: 4px solid transparent; border-left: 5px solid #555; border-right: 0; }
.tri-left { border: 4px solid transparent; border-right: 4px solid #333; border-left: 0; }
.tri-up { border: 3px solid transparent; border-bottom-color: #333; border-top: 0; }
.knob { width: 6px; height: 6px; border: 1px solid #999; border-radius: 50%; background: #ddd; }

/* title bar */
.titlebar { display: flex; flex: none; align-items: center; height: 29px; padding-top: 1px; background: #f5f5f6; border-bottom: 1px solid #808284; }
.logo {
  display: flex; align-items: center; align-self: flex-start; gap: 4px; z-index: 1;
  width: 135px; height: 31px; margin-left: 10px; padding-left: 4px;
  background: #f7f7f7; border: 1px solid #a7a7a7; border-top: 0;
}
.ds { flex: none; width: 27px; height: 25px; fill: none; stroke: #d3262f; stroke-width: 2.500; }
.wordmark { color: #d3262f; font: italic 15px/24px "Noto Sans", sans-serif; }
.flyout { width: 21px; height: 27px; background: #f0f0f0; border-right: 1px solid #999; }
.flyout .tri-right { border-width: 6px 0 6px 7px; }
.quick { display: flex; align-items: center; margin-left: 27px; gap: 1px; }
.pair { display: flex; }
.pair button:first-child, .trio button { width: 20px; height: 24px; }
.pair .drop { height: 24px; }
.trio { display: flex; gap: 4px; }
h1 { flex: 1; margin: 0; padding-right: 4px; font: 11px/14px Roboto, sans-serif; text-align: center; }
.helpsearch { display: flex; align-items: center; width: 189px; height: 21px; padding-left: 3px; background: #f7f7f8; border: 1px solid #bbb; }
.helpsearch input { flex: 1; margin-left: 3px; height: 15px; background: #f0f1f5; color: #555; }
.helpsearch input::placeholder { color: #555; opacity: 1; }
.helpsearch .drop { width: 12px; }
.winctl { display: flex; align-items: center; margin-left: 6px; }
.win { width: 25px; height: 24px; }
.win:last-child { width: 22px; }
.winctl .drop { width: 14px; }
.winctl .q { width: 20px; font: 600 17px/20px "Noto Sans", sans-serif; color: #555; }

/* ribbon */
.ribbon { display: flex; flex: none; height: 82px; padding: 6px 0 2px; background: #f5f5f5; border-bottom: 1px solid #808284; }
.group { display: flex; flex: none; padding-left: 5px; border-right: 1px solid #c8c8c8; }
.big { flex-direction: column; justify-content: flex-start; width: 48px; padding-top: 4px; text-align: center; }
.big .ic { width: 20px; height: 20px; margin-bottom: 1px; }
.big.low { padding-top: 10px; }
.big .tri { margin: auto 0 8px; }
.stack { display: flex; flex-direction: column; padding-top: 1px; }
.stack button { height: 24px; gap: 6px; justify-content: flex-start; }
.g-boss { width: 258px; }
.g-boss .big { width: 58px; }
.g-boss .stack { margin-left: 3px; }
.g-cut { width: 254px; padding-left: 3px; }
.g-cut .stack { margin-left: 5px; }
.g-edit { width: 216px; padding-left: 0; }
.g-edit .big { width: 34px; }
.g-edit .big + .big { width: 42px; }
.g-edit .stack { width: 60px; margin-left: 4px; }
.g-edit .stack + .stack { margin-left: 0; }
.g-ref { width: 102px; padding-left: 4px; border: 0; }
.g-ref .big:first-child { width: 52px; }
.g-ref .big + .big { width: 45px; }
.g-flex { border: 0; padding-left: 1px; }
.g-flex .big { width: 28px; }
.g-flex .on { width: 56px; margin-right: 3px; padding-top: 9px; background: #d0d1d3; border: 1px solid #7398ad; box-shadow: 0 0 0 1px #c4d8e4; }

/* work area */
.work { position: relative; display: flex; flex: 1; min-height: 0; background: #f5f5f6; }
.cmdtabs { position: absolute; z-index: 2; top: 0; left: 0; display: flex; height: 21px; border-bottom: 1px solid #999; }
.cmdtabs button { padding: 0 6px; background: #d4d4d5; border-right: 1px solid #929394; color: #333; font-family: "Noto Sans", sans-serif; }
.cmdtabs .on { background: #f5f5f6; padding-left: 8px; }
.sides { display: flex; flex: none; align-items: flex-start; width: 76px; padding-top: 22px; }
.bar { display: flex; flex-direction: column; padding-top: 11px; background: linear-gradient(90deg, #888 50%, transparent 50%) 4px 2px / 4px 2px repeat-x; border-bottom: 1px solid #999; }
.bar hr { flex: none; width: 100%; margin: 2px 0; border: 0; border-top: 1px solid #999; height: 2px; }
.bar .drop { width: 14px; }
.bar-a { width: 46px; padding-bottom: 6px; border-right: 1px solid #999; }
.bar-a > div { display: flex; height: 25px; align-items: center; padding-left: 3px; }
.bar-a div > button:first-child { width: 25px; height: 25px; }
.bar-a .on { background: #cddbe5; border: 1px solid #7398ad; }
.bar-a hr { width: 38px; margin-left: 4px; }
.bar-b { width: 28px; padding-bottom: 8px; align-items: center; }
.bar-b button { width: 28px; height: 24px; margin-left: 2px; }
.bar-b hr { margin: 3px 0 4px; }

.center { display: flex; flex: 1; flex-direction: column; min-width: 0; }
.panes { display: flex; flex: 1; min-height: 0; }
.manager { display: flex; flex: none; flex-direction: column; width: 223px; padding: 22px 2px 1px 0; border-right: 1px solid #999; }
.grip { display: flex; flex: none; align-items: center; justify-content: center; height: 16px; border: solid #bbb; border-width: 1px 0; }
.mtabs { display: flex; flex: none; height: 24px; margin-top: 3px; border-bottom: 1px solid #aaa; }
.mtabs button { width: 38px; background: #d4d5d6; border: 1px solid #999; border-width: 1px 1px 0 0; }
.mtabs .on { background: #f5f5f6; }
.mtabs .more { width: auto; flex: 1; justify-content: flex-end; padding-right: 4px; background: none; border: 0; }
.more svg { width: 8px; height: 12px; fill: none; stroke: #444; stroke-width: 1.500; }
.filter { display: flex; flex: none; align-items: center; height: 22px; margin-left: 3px; border: 1px solid #c4c4c4; }
.filter input { flex: 1; }
.tree { display: flex; flex: none; flex-direction: column; justify-content: space-between; height: 206px; margin: 2px 0 0; padding: 0; list-style: none; }
.tree li { display: flex; align-items: center; height: 20px; padding-left: 7px; white-space: nowrap; overflow: hidden; gap: 4px; }
.tree span { padding-top: 1px; }
.tree li > i { flex: none; width: 12px; }
.tree .tri-right { width: 5px; margin-right: 7px; }
.tree .root { padding-left: 2px; gap: 3px; }
.sel { display: flex; align-items: center; gap: 4px; height: 20px; margin-left: -2px; padding: 0 3px 0 1px; background: #91b9e0; border: 1px solid #6993b8; font-weight: 400; }
.rollback { flex: none; height: 3px; background: #2768a5; border-bottom: 1px solid #6a5f9c; }
.hscroll { display: flex; align-items: center; height: 16px; margin-top: auto; padding: 0 4px; background: #ededee; }
.hscroll > .tri-right { margin-left: auto; border-left: 4px solid #333; }
.thumb { display: flex; align-items: center; justify-content: center; gap: 2px; width: 174px; height: 14px; margin-left: 8px; background: linear-gradient(#f4f4f4, #d0d1d3); border: 1px solid #999; }
.thumb i { width: 1px; height: 6px; background: #444; }

/* graphics area */
.viewport { position: relative; flex: 1; min-width: 0; overflow: hidden; }
.scene { display: block; width: 100%; height: 100%; }
.splitter { position: absolute; left: 0; top: 251px; width: 7px; height: 37px; background: #f0f0f2; border: 1px solid #999; border-left: 0; }
.hud { position: absolute; top: 4px; left: 0; right: 2px; display: flex; justify-content: center; opacity: .75; }
.hud button { width: 24px; height: 20px; }
.hud .drop { width: 14px; }
.docctl { position: absolute; top: 4px; right: 4px; display: flex; opacity: .7; }
.docctl button { width: 25px; height: 20px; }
.taskpane { position: absolute; top: 56px; right: 0; width: 23px; background: #d6d7da; border: 1px solid #999; border-right: 0; }
.taskpane button { width: 100%; height: 22px; border-bottom: 1px solid #999; }
.taskpane button:last-child { border-bottom: 0; }
.taskpane .on { background: #fff; }

/* bottom tabs and status */
.doctabs { display: flex; flex: none; height: 14px; border-top: 1px solid #999; }
.steps { display: flex; margin-left: 2px; }
.steps button { width: 15px; background: #b7babd; border-right: 1px solid #999; }
.steps svg { width: 14px; height: 12px; fill: #92969a; stroke: #92969a; }
.doctabs > button { padding: 0 9px; background: #d4d5d6; border-right: 1px solid #999; }
.doctabs .on { padding: 0 12px; background: #f5f5f6; font-weight: 700; }
.doctabs .wide { padding-right: 16px; }
.status { display: flex; flex: none; align-items: center; height: 18px; background: #f4f4f4; border-top: 1px solid #808284; }
.doc { flex: 1; padding-left: 1px; }
.cell { height: 16px; padding: 2px 6px; border-right: 1px solid #ccc; }
.edit { margin-left: 6px; border-left: 1px solid #ccc; padding: 2px 6px 2px 4px; }
.gap { width: 3px; margin-left: 12px; padding: 0; }
.units { margin-left: 29px; }
.up { width: 16px; margin: 0 56px 0 10px; }
```
